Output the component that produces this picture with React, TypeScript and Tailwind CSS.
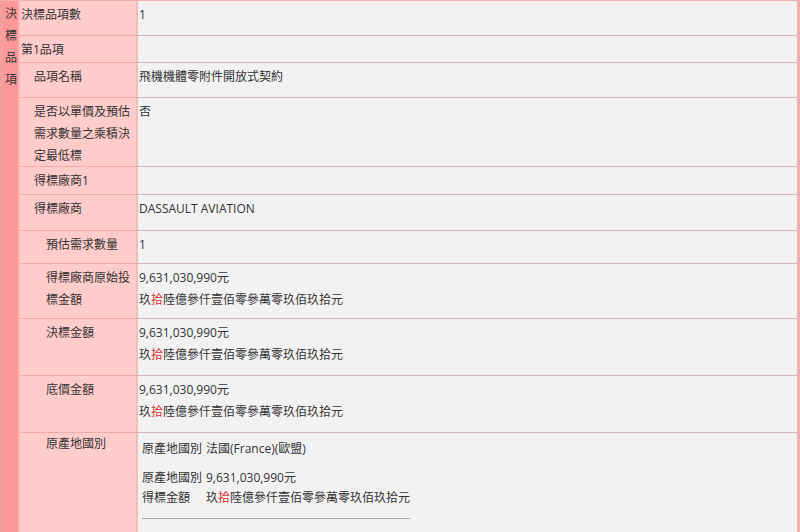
const font = { fontFamily: '"Open Sans", "Noto Sans CJK TC", sans-serif' };

function Amount() {
  return (
    <>
      <div>9,631,030,990元</div>
      <div className="whitespace-nowrap">
        玖<span className="text-[#e0302a]">拾</span>陸億參仟壹佰零參萬零玖佰玖拾元
      </div>
    </>
  );
}

type Row = {
  label: string;
  indent: 0 | 1 | 2;
  h: string;
  value?: React.ReactNode;
};

const rows: Row[] = [
  { label: '決標品項數', indent: 0, h: 'h-[35px]', value: '1' },
  { label: '第1品項', indent: 0, h: 'h-[27px]' },
  { label: '品項名稱', indent: 1, h: 'h-[35px]', value: '飛機機體零附件開放式契約' },
  { label: '是否以單價及預估需求數量之乘積決定最低標', indent: 1, h: 'h-[69px]', value: '否' },
  { label: '得標廠商1', indent: 1, h: 'h-[28px]' },
  { label: '得標廠商', indent: 1, h: 'h-[36px]', value: 'DASSAULT AVIATION' },
  { label: '預估需求數量', indent: 2, h: 'h-[33px]', value: '1' },
  { label: '得標廠商原始投標金額', indent: 2, h: 'h-[55px]', value: <Amount /> },
  { label: '決標金額', indent: 2, h: 'h-[57px]', value: <Amount /> },
  { label: '底價金額', indent: 2, h: 'h-[57px]', value: <Amount /> },
];

const indents = ['pl-[1px]', 'pl-[14px]', 'pl-[26px]'];

export default function App() {
  return (
    <div className="w-[800px] h-[532px] overflow-hidden bg-white text-[12px] leading-[22px] text-[#333]" style={font}>
      <div className="flex border-t border-[#f0b0b0]">
        {/* 左側分類欄 */}
        <div className="w-[20px] shrink-0 bg-[#ff9999] border-l-[3px] border-[#f3a0a0] border-r-2 border-r-[#ffb5b5] pt-[2px] leading-[22px]">
          <div className="w-[12px] ml-[2px]">決標品項</div>
        </div>

        <div className="flex-1 flex flex-col border-r-[3px] border-[#f0b0b0]">
          {rows.map((r, i) => (
            <div key={i} className={`flex ${r.h}`}>
              <div
                className={`w-[118px] shrink-0 bg-[#ffcccc] border-b border-[#f2aaaa] border-r-2 border-r-[#f4bdbd] pt-[3px] pr-[3px] ${indents[r.indent]}`}
              >
                {r.label}
              </div>
              <div className="flex-1 bg-[#f2f2f2] border-b border-[#dcb4b4] pl-[1px] pt-[3px]">{r.value}</div>
            </div>
          ))}

          {/* 原產地國別 */}
          <div className="flex h-[100px]">
            <div className="w-[118px] shrink-0 bg-[#ffcccc] border-r-2 border-r-[#f4bdbd] pt-0 pl-[26px]">原產地國別</div>
            <div className="flex-1 bg-[#f2f2f2] pl-[4px] pt-[5px] leading-[20px]">
              <div className="w-[268px]">
                <div className="flex py-[1px]">
                  <div className="w-[64px] shrink-0">原產地國別</div>
                  <div className="whitespace-nowrap">法國(France)(歐盟)</div>
                </div>
                <div className="flex mt-[8px] pb-[10px] border-b border-[#a8a8a8]">
                  <div className="w-[64px] shrink-0">原產地國別得標金額</div>
                  <div>
                    <Amount />
                  </div>
                </div>
              </div>
            </div>
          </div>
        </div>
      </div>
    </div>
  );
}
